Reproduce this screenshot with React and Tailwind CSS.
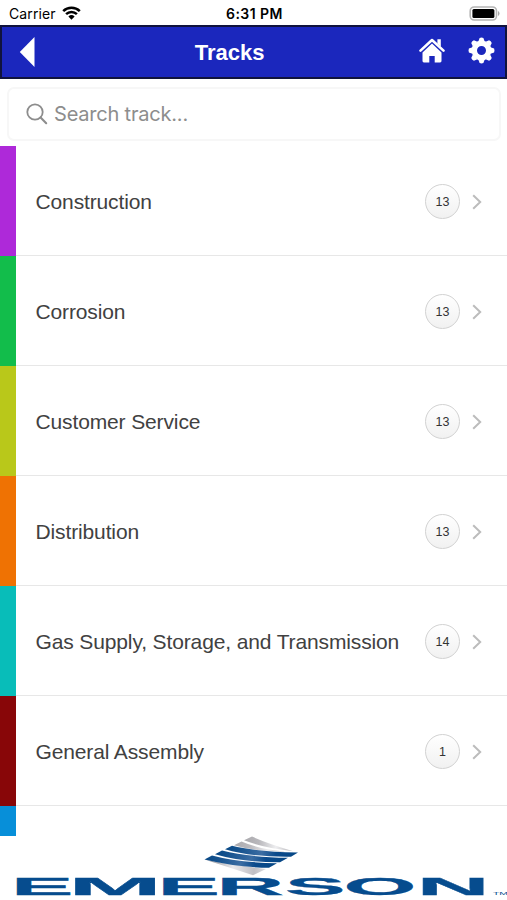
const tracks = [
  { name: "Construction", count: 13, color: "bg-[#ae29d9]" },
  { name: "Corrosion", count: 13, color: "bg-[#12bd4b]" },
  { name: "Customer Service", count: 13, color: "bg-[#b9c81a]" },
  { name: "Distribution", count: 13, color: "bg-[#ef7203]" },
  { name: "Gas Supply, Storage, and Transmission", count: 14, color: "bg-[#08bdb9]" },
  { name: "General Assembly", count: 1, color: "bg-[#880608]" },
];

function StatusBar() {
  return (
    <div className="h-[25px] grid grid-cols-3 items-center pl-[9px] pr-[7px] pt-[3px] text-black">
      <div className="flex items-center gap-[6px]">
        <span className="font-[Inter,sans-serif] text-[14px] leading-none tracking-[0.1px]">Carrier</span>
        <svg width="19" height="14" viewBox="0 0 19 14" className="mb-[2px]">
          <g fill="none" stroke="#000" strokeWidth="2.5">
            <path d="M1.2 5.1a11.8 11.8 0 0 1 16.6 0" />
            <path d="M4.1 8.2a7.7 7.7 0 0 1 10.8 0" />
          </g>
          <path d="M9.5 13.7 6.4 10.5a4.5 4.5 0 0 1 6.2 0z" />
        </svg>
      </div>
      <span className="text-center font-[Inter,sans-serif] text-[14px] font-semibold leading-none tracking-[0.45px]">
        6:31 PM
      </span>
      <svg width="31" height="15" viewBox="0 0 31 15" className="justify-self-end mb-[2px]">
        <rect x="1.2" y="1" width="26.3" height="13" rx="4" fill="#fff" stroke="#b5b5b5" strokeWidth="1.6" />
        <rect x="3.4" y="3" width="22" height="9" rx="1.5" />
        <path d="M29 5v5q1.5-.7 1.5-2.5T29 5z" fill="#aaa" />
      </svg>
    </div>
  );
}

function Header() {
  return (
    <div className="h-[54px] grid grid-cols-3 items-center bg-[#1b27bd] border-2 border-[#10133d] pl-[17px] pr-[10px] text-white">
      <svg width="16" height="30" viewBox="0 0 16 30">
        <path d="M.8 15 15.5 0v30z" fill="#fff" />
      </svg>
      <span className="pl-[17px] pt-[2px] font-['Liberation_Sans',sans-serif] text-[22px] font-bold leading-none">
        Tracks
      </span>
      <div className="flex items-center justify-end gap-[23px] pb-[3px]">
        <svg width="26" height="25" viewBox="0 0 26 25" fill="#fff">
          <path d="M18.4 1.3h3.4v7.5l-3.4-3.2z" />
          <path d="M1.5 12.6 13 2l11.5 10.6" fill="none" stroke="#fff" strokeWidth="2.6" strokeLinecap="round" strokeLinejoin="round" />
          <path d="m13 5.6 9.5 8.8v8.6q0 1.4-1.4 1.4h-5.4v-6.4h-5.4v6.4H4.9q-1.4 0-1.4-1.4v-8.6z" />
        </svg>
        <svg width="27" height="27" viewBox="-13.5 -13.5 27 27">
          <circle r="7.2" fill="none" stroke="#fff" strokeWidth="5.4" />
          <g fill="#fff">
            {[0, 45, 90, 135, 180, 225, 270, 315].map((angle) => (
              <path key={angle} d="M-3.2-9-1.9-12.6Q0-13.4 1.9-12.6L3.2-9z" transform={`rotate(${angle})`} />
            ))}
          </g>
        </svg>
      </div>
    </div>
  );
}

function SearchBox() {
  return (
    <div className="px-[7px] pt-[8px] pb-[5px]">
      <div className="h-[54px] w-[494px] flex items-center gap-[6px] rounded-[7px] border-2 border-[#f7f7f7] bg-white pl-[17px] text-[#8d8d8d]">
        <svg width="22" height="22" viewBox="0 0 22 22" fill="none" stroke="currentColor" strokeWidth="1.8" strokeLinecap="round">
          <circle cx="9" cy="9" r="7.7" />
          <path d="m14.6 14.6 5.6 5.6" strokeWidth="2.1" />
        </svg>
        <span className="font-[Inter,sans-serif] text-[20px] leading-none tracking-[-0.2px]">Search track...</span>
      </div>
    </div>
  );
}

function TrackRow({ track }) {
  return (
    <div className="h-[110px] shrink-0 flex">
      <div className={`w-[15.5px] shrink-0 ${track.color}`} />
      <div className="flex-1 flex items-center border-b border-[#e7e7e7] pl-5 pr-[25px] pt-[2px]">
        <span className="flex-1 whitespace-nowrap font-['Liberation_Sans',sans-serif] text-[21px] leading-none tracking-[-0.13px] text-[#414141]">
          {track.name}
        </span>
        <span className="size-[35px] flex items-center justify-center rounded-full border-[1.5px] border-[#d2d2d2] bg-linear-to-b from-white to-[#f1f1f1] pt-px font-['Liberation_Sans',sans-serif] text-[12.5px] text-[#333]">
          {track.count}
        </span>
        <svg width="10" height="16" viewBox="0 0 10 16" className="ml-[12px]" fill="none" stroke="#bcbcbc" strokeWidth="2">
          <path d="m1.2 1.2 7 6.8-7 6.8" />
        </svg>
      </div>
    </div>
  );
}

function SponsorLogo() {
  return (
    <svg width="507" height="64" viewBox="0 0 507 64" className="block shrink-0">
      <defs>
        <linearGradient id="silver">
          <stop offset="0" stopColor="#aaa9ad" />
          <stop offset=".3" stopColor="#b9b8bc" />
          <stop offset=".65" stopColor="#eeeef0" />
          <stop offset="1" stopColor="#b5b4b8" />
        </linearGradient>
        <linearGradient id="base">
          <stop offset="0" stopColor="#8f8e94" />
          <stop offset=".45" stopColor="#e9e9ec" />
          <stop offset=".8" stopColor="#c0bfc4" />
          <stop offset="1" stopColor="#dcdcdf" />
        </linearGradient>
        <linearGradient id="blue">
          <stop offset="0" stopColor="#064785" />
          <stop offset=".25" stopColor="#1c5792" />
          <stop offset=".5" stopColor="#3c6da3" />
          <stop offset=".7" stopColor="#0a4a8c" />
          <stop offset="1" stopColor="#064785" />
        </linearGradient>
      </defs>
      <g fill="url(#silver)">
        <path d="M244 4.3 252 .6Q266 7 293 15.2Q264 12 244 4.3z" />
        <path d="M234 9.2 241.5 5.5Q260 13.5 286 15.7Q255 15.5 234 9.2z" />
      </g>
      <path d="M206 24Q238 29.5 266 33L253 39.3Q228 31 206 24z" fill="url(#base)" />
      <g fill="url(#blue)">
        <path d="M225 13.3 232 9.8Q256 15.8 298 16.6L291 20.8Q252 21.3 225 13.3z" />
        <path d="M215 18.3 222 14.6Q247 21 288 21.8L280 26.3Q243 26.5 215 18.3z" />
        <path d="M204.5 23.5 212 19.5Q238 26.5 277 27.2L269 31.8Q238 31.5 204.5 23.5z" />
      </g>
      <text
        transform="translate(0 59) scale(3.9 1)"
        y="0"
        className="font-['Liberation_Sans',sans-serif] text-[24px] font-bold"
        fill="#064c8e"
        stroke="#064c8e"
        strokeWidth="0.25"
      >
        <tspan x="2.8">E</tspan>
        <tspan x="17.5" textLength="24" lengthAdjust="spacingAndGlyphs">M</tspan>
        <tspan x="40.4">E</tspan>
        <tspan x="55.5">R</tspan>
        <tspan x="73.1" textLength="15.5" lengthAdjust="spacingAndGlyphs">S</tspan>
        <tspan x="88.1">O</tspan>
        <tspan x="106.8" textLength="18.8" lengthAdjust="spacingAndGlyphs">N</tspan>
      </text>
      <text x="493" y="58.5" textLength="15" lengthAdjust="spacingAndGlyphs" className="font-['Liberation_Sans',sans-serif] text-[4px]" fill="#064c8e">
        TM
      </text>
    </svg>
  );
}

export default function App() {
  return (
    <div className="w-[507px] h-[900px] flex flex-col overflow-hidden bg-white">
      <StatusBar />
      <Header />
      <SearchBox />
      {tracks.map((track) => (
        <TrackRow key={track.name} track={track} />
      ))}
      {/* top edge of the next row, cut off by the sponsor banner */}
      <div className="h-[30px] w-[15.5px] shrink-0 bg-[#078fd9]" />
      <SponsorLogo />
    </div>
  );
}
